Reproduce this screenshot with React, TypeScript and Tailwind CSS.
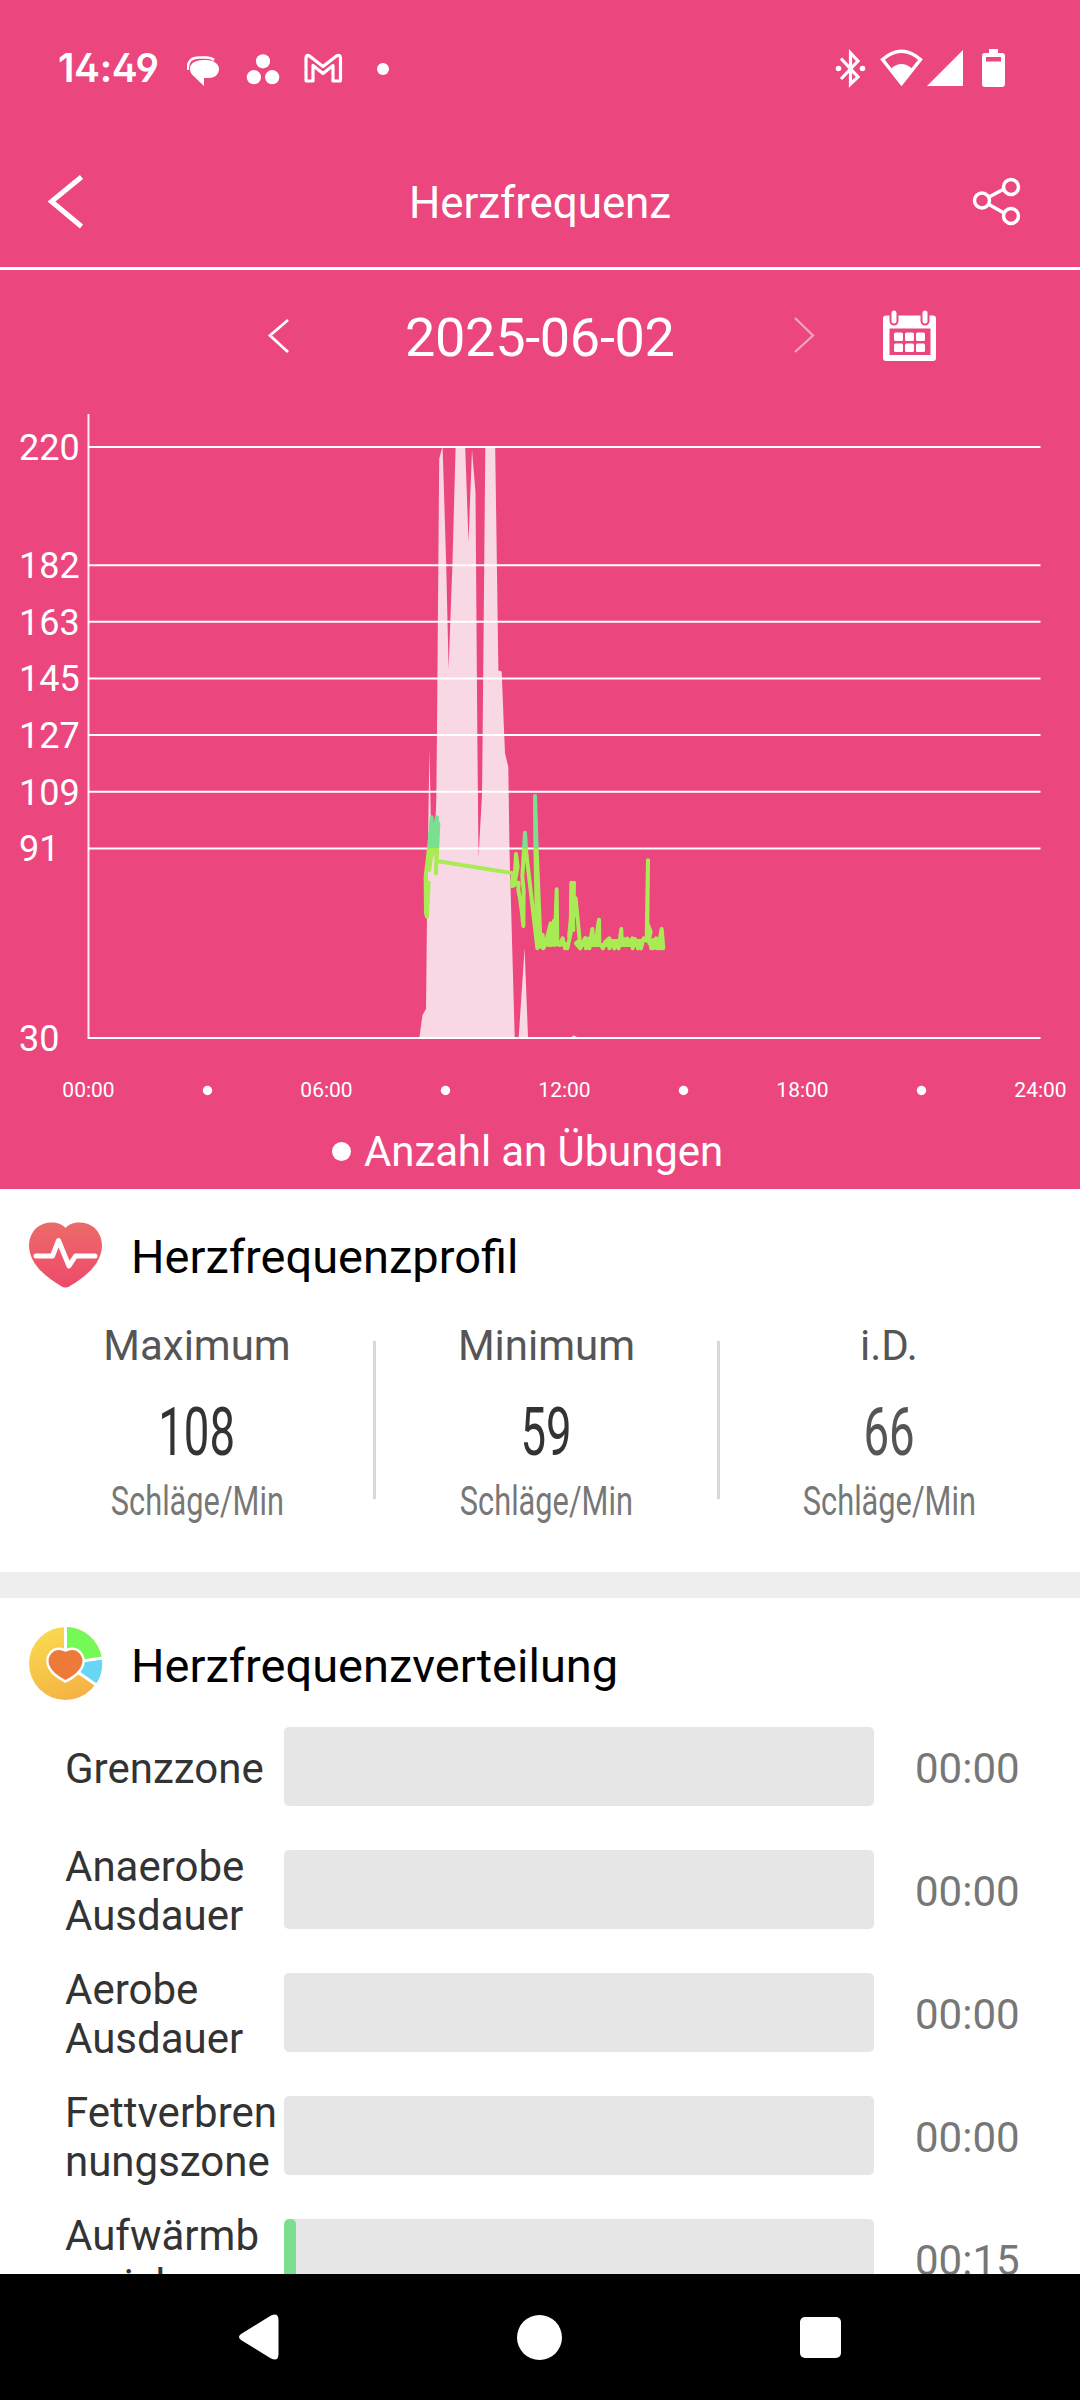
const gridLines = [
  { label: "220", y: 447 },
  { label: "182", y: 565.3 },
  { label: "163", y: 621.8 },
  { label: "145", y: 678.4 },
  { label: "127", y: 735 },
  { label: "109", y: 791.7 },
  { label: "91", y: 848.4 },
  { label: "30", y: 1038 },
];

const hours = ["00:00", "06:00", "12:00", "18:00", "24:00"];

const zones = [
  { name: "Grenzzone", time: "00:00", width: 0 },
  { name: "Anaerobe Ausdauer", time: "00:00", width: 0 },
  { name: "Aerobe Ausdauer", time: "00:00", width: 0 },
  { name: "Fettverbrennungszone", time: "00:00", width: 0 },
  { name: "Aufwärmbereich", time: "00:15", width: 12 },
];

const StatusBar = () => {
  return (
    <div className="flex h-[134px] items-start justify-between">
      <div className="flex items-start">
        <span className="ml-[58px] mt-[44px] w-[129px] font-['Inter'] text-[39px] leading-[48px] font-semibold tracking-[-0.4px] [font-feature-settings:'ss01']">
          14:49
        </span>
        <svg className="mt-[44px]" width="210" height="48" viewBox="187 44 210 48" fill="none">
          {/* Messages */}
          <path d="M188 70 C187 61 192 57.500 199 57.500 H206 Q211 57.500 214 60" stroke="#fff" strokeWidth="2.500" />
          <path
            d="M203 60 H206 C214 60 219 64 219 69 C219 74 215 78 209 78 H204 V86 L193 75.500 C190.500 73 190 71 190 68.500 C190 64 195 60 203 60Z"
            fill="#fff"
          />
          {/* Asana */}
          <circle cx="263" cy="61.300" r="7.100" fill="#fff" />
          <circle cx="253.900" cy="77.200" r="7.100" fill="#fff" />
          <circle cx="272.200" cy="77.200" r="7.100" fill="#fff" />
          {/* Gmail */}
          <path
            d="M309.500 56 L323 66.500 L336.500 56 Q340.500 54 340.500 58.500 V80 Q340.500 81 339.500 81 H333 V65.500 L323 73.500 L313 65.500 V81 H307 Q306 81 306 80 V58.500 Q306 54 309.500 56Z"
            stroke="#fff"
            strokeWidth="3.200"
            strokeLinejoin="round"
          />
          <circle cx="383" cy="69" r="6" fill="#fff" />
        </svg>
      </div>
      <svg className="mr-[70px] mt-[44px]" width="180" height="48" viewBox="830 44 180 48" fill="none">
        {/* Bluetooth */}
        <path d="M841 58.500 L858 77 L850.500 84 V53 L858 61 L841 79" stroke="#fff" strokeWidth="3.200" />
        <circle cx="838.500" cy="68.500" r="2.800" fill="#fff" />
        <circle cx="862.500" cy="68.500" r="2.800" fill="#fff" />
        {/* Wifi */}
        <path d="M882.500 59.500 Q901.500 43 920.500 59.500 L901.500 83.500Z" stroke="#fff" strokeWidth="3.400" />
        <path d="M890.500 69 Q901.500 59 912.500 69 L901.500 84Z" fill="#fff" />
        <path d="M927 86 L963 50 V86Z" fill="#fff" />
        {/* Battery */}
        <path
          fillRule="evenodd"
          d="M989 49 H998 V53 H1002 Q1005 53 1005 56 V84 Q1005 87 1002 87 H985 Q982 87 982 84 V56 Q982 53 985 53 H989Z M986 57 V61.500 H1001 V57Z"
          fill="#fff"
        />
      </svg>
    </div>
  );
};

const Header = () => {
  return (
    <header className="grid h-[136px] grid-cols-[120px_1fr_120px] items-center border-b-3 border-white">
      <svg className="ml-[44px]" width="44" height="60" viewBox="44 171 44 60" fill="none">
        <path d="M81.500 177 L51.500 201.500 L81.500 226.500" stroke="#fff" strokeWidth="5" />
      </svg>
      <h1 className="pt-[5px] text-center text-[44px] leading-[60px] tracking-[-0.1px]">Herzfrequenz</h1>
      <svg className="ml-[8px]" width="60" height="60" viewBox="968 171 60 60" fill="none" stroke="#fff" strokeWidth="3.500">
        <circle cx="982" cy="200.500" r="7.500" />
        <circle cx="1011" cy="187" r="7.500" />
        <circle cx="1011" cy="216" r="7.500" />
        <path d="M989 197 L1004 189 M989 204.500 L1004 213" />
      </svg>
    </header>
  );
};

const DatePicker = () => {
  return (
    <div className="flex h-[130px] items-center">
      <svg className="ml-[264px]" width="30" height="50" viewBox="264 310 30 50" fill="none">
        <path d="M288 320 L270 335.500 L288 352" stroke="#fff" strokeWidth="2.800" />
      </svg>
      <span className="ml-[111px] w-[272px] whitespace-nowrap pt-[5px] text-[54px] leading-[64px] tracking-[-0.3px]">
        2025-06-02
      </span>
      <svg className="ml-[113px]" width="30" height="50" viewBox="790 310 30 50" fill="none">
        <path d="M795 318 L813 335.500 L795 352" stroke="#fff" strokeOpacity="0.5" strokeWidth="2.200" />
      </svg>
      {/* Calendar */}
      <svg className="ml-[60px]" width="60" height="60" viewBox="880 305 60 60">
        <rect x="883" y="315.500" width="53" height="45.500" rx="3" fill="#fff" />
        <rect x="889.500" y="328.500" width="41" height="26.500" fill="#EC467E" />
        <rect x="890.500" y="309.500" width="7" height="15" rx="3.500" fill="#fff" stroke="#EC467E" strokeWidth="2" />
        <rect x="921.500" y="309.500" width="7" height="15" rx="3.500" fill="#fff" stroke="#EC467E" strokeWidth="2" />
        {[894, 905, 916].map((x) => (
          <g key={x} fill="#fff">
            <rect x={x} y="332.500" width="9" height="8.500" rx="1.500" />
            <rect x={x} y="343.500" width="9" height="8.500" rx="1.500" />
          </g>
        ))}
      </svg>
    </div>
  );
};

const HeartRateChart = () => {
  return (
    <svg width="1080" height="720" viewBox="0 400 1080 720" fontFamily="Roboto, sans-serif">
      <defs>
        <linearGradient id="rate" gradientUnits="userSpaceOnUse" x1="0" y1="0" x2="0" y2="1000">
          <stop offset="0.355" stopColor="#7ADF90" />
          <stop offset="0.355" stopColor="#A8EB55" />
        </linearGradient>
      </defs>

      {/* Exercise amount */}
      <path
        fill="#F8D8E4"
        d="M419.500 1037 L422.500 1015 L426 1009 L427.500 870 L429.500 748 L431 830 L434 858 L436.300 800 L437 730 L439.200 459 L441.500 450 L442.600 447 L446.200 565 L448.600 669 L452.400 565 L455.600 447 H465.200 L468.500 542 L472 450 L475.500 492 L477.300 730 L478.500 857 L482 795 L482.700 730 L485.300 447 H495.200 L498.400 670.500 L501.700 671.500 L504 730 L505 753 L508.300 767 L509.500 850 L514.700 1037Z"
      />
      <path fill="#F8D8E4" d="M518.700 1037 L524.600 948 L528 1037Z M571 1037 L574 1035.500 L577 1037Z" />

      {gridLines.map((line) => (
        <g key={line.label}>
          <path d={`M88 ${line.y} H1040.500`} stroke="#fff" strokeWidth="2" />
          <text x="19" y={line.y + 13} fontSize="36" fill="#fff">
            {line.label}
          </text>
        </g>
      ))}
      <path d="M88.500 414 V1039" stroke="#fff" strokeOpacity="0.9" strokeWidth="2" />

      {/* Heart rate */}
      <g
        transform="translate(380 730) scale(0.33333)"
        fill="none"
        stroke="url(#rate)"
        strokeWidth="12"
        strokeLinejoin="round"
        strokeLinecap="round"
      >
        <polyline points="146,458 141,560 138,550 137,440 147,355 155,262 154,370 148,420 150,330 160,310 158,368 162,300 171,262 168,430 172,300 175,280 170,393 400,430 395,468 403,466 408,372 413,410 404,458 416,458 415,480 420,505 426,550 430,588 431,480 427,440 435,308 439,370 472,655 466,340 465,198 470,360 482,650 488,615 490,655 497,640 512,580 506,645 516,600 514,645 522,572 524,645 530,478 532,640 540,645 548,625 555,655 562,655 572,610 574,458 578,590 582,458 580,560 587,505 600,640 588,640 601,655 608,640 616,624 618,655 626,626 628,655 637,597 639,640 646,643 657,569 658,640 662,645 669,655 676,636 688,625 688,655 696,634 703,655 709,634 716,655 724,597 725,640 730,626 736,644 742,626 748,644 757,625 758,655 765,627 774,655 776,632 783,655 791,625 800,632 804,391 802,580 812,605 808,625 814,655 820,630 820,655 829,625 831,655 838,636 845,597 846,640 840,655 850,655 845,597" />
        <path d="M492 643 H560 M504 630 L520 600 M592 636 L612 645 H784 M612 633 H645 M680 633 H786 M808 640 H846" />
        <path d="M153 300 L150 380 M166 300 L169 350 M567 620 L577 530 L580 600 M470 400 L476 640" />
      </g>

      {/* Time axis */}
      {hours.map((hour, i) => (
        <text key={hour} x={88.5 + i * 238} y="1097" fontSize="21" fill="#fff" textAnchor="middle">
          {hour}
        </text>
      ))}
      {[207.5, 445.5, 683.5, 921.5].map((x) => (
        <circle key={x} cx={x} cy="1090.500" r="4.700" fill="#fff" />
      ))}
    </svg>
  );
};

const HeartIcon = () => {
  return (
    <svg width="74" height="74" viewBox="29 1219 74 74" fill="none">
      <defs>
        <linearGradient id="heart" x1="0" y1="0" x2="0" y2="1">
          <stop stopColor="#EC6A68" />
          <stop offset="1" stopColor="#EE4A6C" />
        </linearGradient>
      </defs>
      <path
        d="M65.500 1228 C71 1222 80 1221.500 88 1224 C98 1228 102 1237 102 1246 C101 1266 83 1278 70 1286 Q65.500 1289 61 1286 C48 1278 30 1266 29 1246 C29 1237 33 1228 43 1224 C51 1221.500 60 1222 65.500 1228Z"
        fill="url(#heart)"
      />
      <path
        d="M36 1256 H52.500 L58.500 1240.500 L69 1266 L75.500 1256 H95"
        stroke="#fff"
        strokeWidth="5"
        strokeLinecap="round"
        strokeLinejoin="round"
      />
    </svg>
  );
};

const ZonesIcon = () => {
  return (
    <svg width="74" height="74" viewBox="29 1627 74 74">
      <defs>
        <linearGradient id="ring" x1="0.200" y1="0" x2="0.600" y2="1">
          <stop stopColor="#FADB50" />
          <stop offset="1" stopColor="#F4B244" />
        </linearGradient>
      </defs>
      <circle cx="65.500" cy="1663.500" r="36.500" fill="url(#ring)" />
      <path d="M65.500 1663.500 V1627 A36.500 36.500 0 0 1 101.700 1658Z" fill="#74F957" />
      <path d="M65.500 1663.500 L101.700 1658 A36.500 36.500 0 0 1 95.500 1684.500Z" fill="#66D6F4" />
      <path d="M65.500 1626 V1663.500 L103 1658 M65.500 1663.500 L97 1685.500" stroke="#fff" strokeWidth="3" fill="none" />
      <path
        d="M65.500 1650.500 C70 1648 76 1648 80 1652 C86 1659 84 1667 77 1674 Q71 1679 65.500 1681.500 Q60 1679 54 1674 C47 1667 45 1659 51 1652 C55 1648 61 1648 65.500 1650.500Z"
        fill="#EE7A3A"
        stroke="#fff"
        strokeWidth="2.500"
      />
    </svg>
  );
};

const Stat = ({ label, value, color }: { label: string; value: string; color: string }) => {
  return (
    <div className="flex flex-col items-center">
      <span className="text-[42px] leading-[50px] text-[#555555]">{label}</span>
      <span className={`mt-[22px] scale-x-[0.69] text-[66px] leading-[80px] ${color}`}>{value}</span>
      <span className="mt-[3px] scale-x-[0.75] whitespace-nowrap text-[41px] leading-[50px] text-[#777777]">
        Schläge/Min
      </span>
    </div>
  );
};

const App = () => {
  return (
    <div className="flex h-[2400px] w-[1080px] flex-col overflow-hidden bg-white font-['Roboto',sans-serif]">
      {/* Pink area */}
      <div className="h-[1189px] shrink-0 bg-[#EC467E] text-white">
        <StatusBar />
        <Header />
        <DatePicker />
        <HeartRateChart />
        <div className="flex h-[63px] items-center pl-[332px]">
          <span className="size-[19px] rounded-full bg-white" />
          <span className="ml-[13px] text-[42px] leading-[50px] tracking-[-0.1px]">Anzahl an Übungen</span>
        </div>
      </div>

      {/* Profile */}
      <section className="h-[383px] shrink-0">
        <div className="flex items-center pl-[29px] pt-[30px]">
          <HeartIcon />
          <h2 className="ml-[28px] pt-[2px] text-[47px] leading-[72px] text-black">Herzfrequenzprofil</h2>
        </div>
        <div className="mt-[28px] grid grid-cols-[352px_3px_341px_3px_338px] pl-[21px]">
          <Stat label="Maximum" value="108" color="text-[#333333]" />
          <div className="mt-[20px] h-[158px] bg-[#D8D8D8]" />
          <Stat label="Minimum" value="59" color="text-[#333333]" />
          <div className="mt-[20px] h-[158px] bg-[#D8D8D8]" />
          <Stat label="i.D." value="66" color="text-[#555555]" />
        </div>
      </section>

      <div className="h-[26px] shrink-0 bg-[#EEEEEE]" />

      {/* Zones */}
      <section className="min-h-0 flex-1 overflow-hidden">
        <div className="flex items-center pl-[29px] pt-[29px]">
          <ZonesIcon />
          <h2 className="ml-[28px] pt-[3px] text-[47px] leading-[71px] text-black">Herzfrequenzverteilung</h2>
        </div>
        <div className="mt-[4px]">
          {zones.map((zone) => (
            <div key={zone.name} className="flex h-[123px] items-center pl-[65px]">
              <span className="w-[219px] pr-[6px] pt-[3px] text-[42px] leading-[49px] wrap-break-word text-[#333333]">
                {zone.name}
              </span>
              <div className="h-[79px] w-[590px] overflow-hidden rounded-[5px] bg-[#E6E6E6]">
                <div className="h-full rounded-[5px] bg-[#7ADF90]" style={{ width: zone.width }} />
              </div>
              <span className="ml-[41px] pt-[4px] text-[42px] leading-[50px] text-[#777777]">{zone.time}</span>
            </div>
          ))}
        </div>
      </section>

      {/* Navigation bar */}
      <nav className="flex h-[126px] shrink-0 items-center bg-black">
        <svg className="ml-[238px]" width="42" height="46" viewBox="0 0 42 46">
          <path d="M33 1.500 Q40.500 -2 40.500 6 V40 Q40.500 48 33 44.500 L3 26 Q-1 23 3 20Z" fill="#fff" />
        </svg>
        <div className="ml-[237px] size-[45px] rounded-full bg-white" />
        <div className="ml-[238px] size-[41px] rounded-[5px] bg-white" />
      </nav>
    </div>
  );
};

export default App;
